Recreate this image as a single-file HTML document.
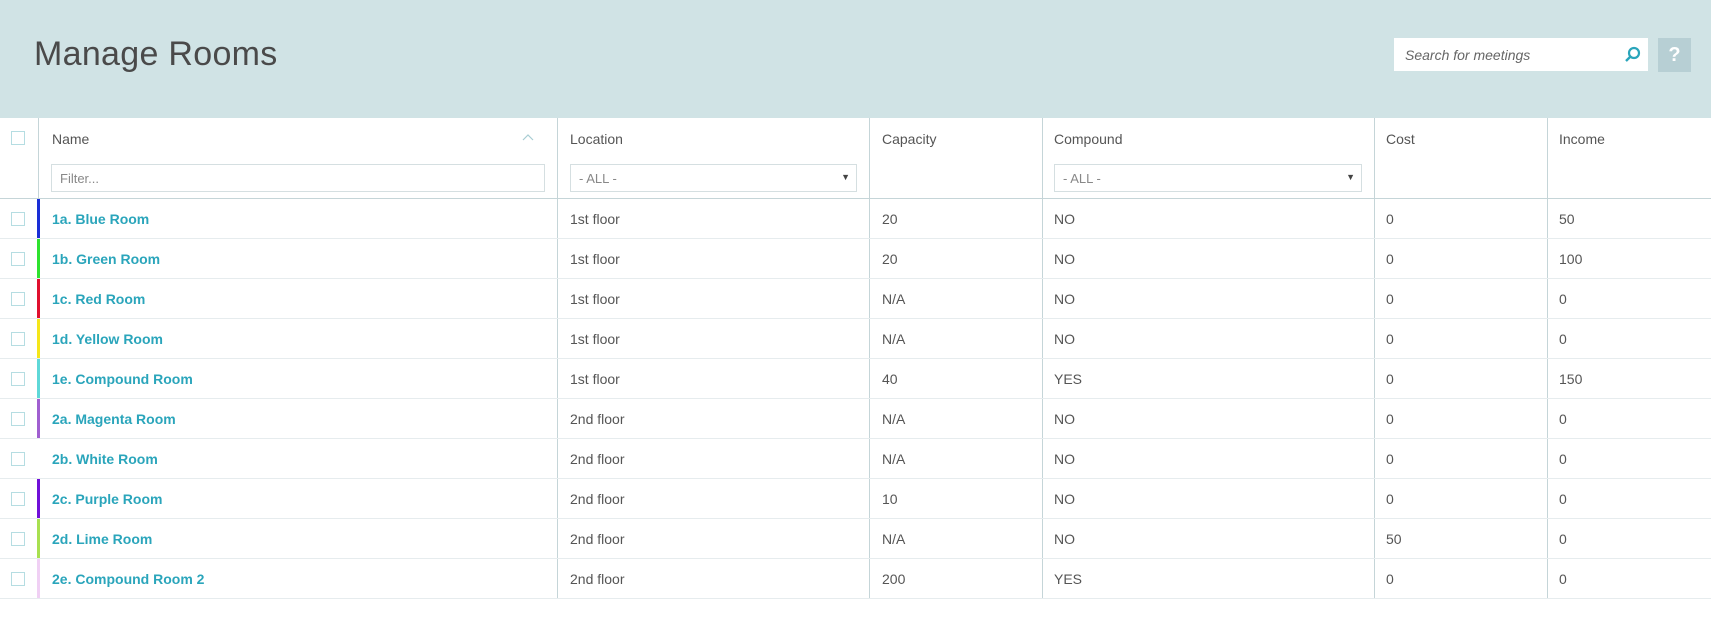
<!DOCTYPE html>
<html><head><meta charset="utf-8"><style>
*{box-sizing:border-box;margin:0;padding:0}
body{width:1711px;height:620px;background:#fff;font-family:"Liberation Sans",sans-serif;position:relative;overflow:hidden;color:#555}
.hdr{position:absolute;left:0;top:0;width:1711px;height:118px;background:#d0e3e5}
.title{position:absolute;left:34px;top:35px;font-size:34px;font-weight:300;color:#4a4a4a;letter-spacing:0.3px}
.search{position:absolute;left:1394px;top:38px;width:254px;height:33px;background:#fff;font-style:italic;color:#666;font-size:14px;padding:9px 11px}
.help{position:absolute;left:1658px;top:38px;width:33px;height:34px;background:#b7cfd4;color:#fff;font-weight:bold;font-size:20px;text-align:center;line-height:34px}
.a{position:absolute}
.vl{position:absolute;top:118px;height:480px;width:1px;background:#c5d5d8}
.hl{position:absolute;left:0;width:1711px;height:1px;background:#e6ecee}
.cb{position:absolute;left:11px;width:14px;height:14px;border:1px solid #b5dde2;background:#fff}
.th{position:absolute;top:131px;font-size:14px;color:#555}
.td{position:absolute;font-size:14px;color:#555}
.nm{position:absolute;left:52px;font-size:14px;color:#2aa5bb;font-weight:bold}
.bar{position:absolute;left:37px;width:3px;height:40px}
.inp{position:absolute;top:164px;height:28px;border:1px solid #d5dfe1;font-size:13px;color:#888;padding:6px 8px;background:#fff}
.arr{position:absolute;right:6px;top:7px;font-size:9px;color:#444}
</style></head><body>
<div class="hdr"></div>
<div class="title">Manage Rooms</div>
<div class="search">Search for meetings
<svg style="position:absolute;right:7px;top:8px" width="17" height="17" viewBox="0 0 17 17"><circle cx="10" cy="7" r="5" fill="none" stroke="#2aa5bb" stroke-width="2.2"/><line x1="6.5" y1="10.5" x2="2" y2="15" stroke="#2aa5bb" stroke-width="2.4"/></svg></div>
<div class="help">?</div>

<div class="hl" style="top:198px;background:#c5d5d8"></div>
<div class="vl" style="left:38px"></div>
<div class="vl" style="left:557px"></div>
<div class="vl" style="left:869px"></div>
<div class="vl" style="left:1042px"></div>
<div class="vl" style="left:1374px"></div>
<div class="vl" style="left:1547px"></div>

<div class="cb" style="top:131px"></div>
<div class="th" style="left:52px">Name</div>
<svg class="a" style="left:522px;top:133px" width="12" height="8" viewBox="0 0 12 8"><polyline points="1,7 6,2 11,7" fill="none" stroke="#a8cdd3" stroke-width="1.2"/></svg>
<div class="th" style="left:570px">Location</div>
<div class="th" style="left:882px">Capacity</div>
<div class="th" style="left:1054px">Compound</div>
<div class="th" style="left:1386px">Cost</div>
<div class="th" style="left:1559px">Income</div>
<div class="inp" style="left:51px;width:494px">Filter...</div>
<div class="inp" style="left:570px;width:287px">- ALL -<span class="arr">▼</span></div>
<div class="inp" style="left:1054px;width:308px">- ALL -<span class="arr">▼</span></div>

<div id="rows"></div>
<script>
var d=[["1a. Blue Room","1st floor","20","NO","0","50","#1a2fd6"],
["1b. Green Room","1st floor","20","NO","0","100","#2fe22f"],
["1c. Red Room","1st floor","N/A","NO","0","0","#e0102f"],
["1d. Yellow Room","1st floor","N/A","NO","0","0","#f5e61a"],
["1e. Compound Room","1st floor","40","YES","0","150","#5fd8d8"],
["2a. Magenta Room","2nd floor","N/A","NO","0","0","#a05fd0"],
["2b. White Room","2nd floor","N/A","NO","0","0","#ffffff"],
["2c. Purple Room","2nd floor","10","NO","0","0","#7010d8"],
["2d. Lime Room","2nd floor","N/A","NO","50","0","#a8e050"],
["2e. Compound Room 2","2nd floor","200","YES","0","0","#f0d0f4"]];
var h="";
d.forEach(function(r,i){var t=199+i*40;
h+='<div class="bar" style="top:'+t+'px;background:'+r[6]+'"></div>';
h+='<div class="hl" style="top:'+(t+39)+'px"></div>';
h+='<div class="cb" style="top:'+(t+13)+'px"></div>';
h+='<div class="nm" style="top:'+(t+12)+'px">'+r[0]+'</div>';
var xs=[570,882,1054,1386,1559];
for(var k=0;k<5;k++)h+='<div class="td" style="left:'+xs[k]+'px;top:'+(t+12)+'px">'+r[k+1]+'</div>';
});
document.getElementById("rows").innerHTML=h;
</script>
</body></html>
